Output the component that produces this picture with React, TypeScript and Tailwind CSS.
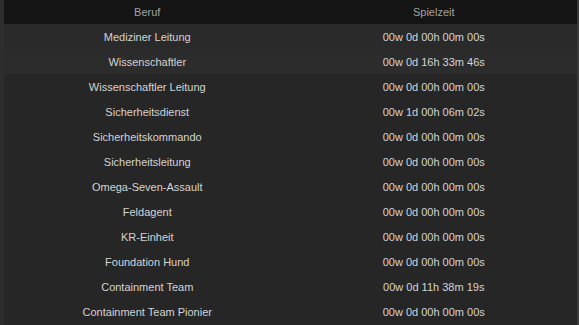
import React from "react";

type Row = { job: string; time: string };

const rows: Row[] = [
  { job: "Mediziner Leitung", time: "00w 0d 00h 00m 00s" },
  { job: "Wissenschaftler", time: "00w 0d 16h 33m 46s" },
  { job: "Wissenschaftler Leitung", time: "00w 0d 00h 00m 00s" },
  { job: "Sicherheitsdienst", time: "00w 1d 00h 06m 02s" },
  { job: "Sicherheitskommando", time: "00w 0d 00h 00m 00s" },
  { job: "Sicherheitsleitung", time: "00w 0d 00h 00m 00s" },
  { job: "Omega-Seven-Assault", time: "00w 0d 00h 00m 00s" },
  { job: "Feldagent", time: "00w 0d 00h 00m 00s" },
  { job: "KR-Einheit", time: "00w 0d 00h 00m 00s" },
  { job: "Foundation Hund", time: "00w 0d 00h 00m 00s" },
  { job: "Containment Team", time: "00w 0d 11h 38m 19s" },
  { job: "Containment Team Pionier", time: "00w 0d 00h 00m 00s" },
];

const rowBg = ["bg-[#2a2a2a]", "bg-[#2c2c2c]"];

export default function App() {
  return (
    <div
      className="w-[579px] h-[325px] overflow-hidden bg-[#262626] flex"
      style={{ fontFamily: '"Liberation Sans", Arial, sans-serif' }}
    >
      <div className="w-[4px] bg-[#2d2d2d] shrink-0" />
      <div className="flex-1 flex flex-col">
        <div className="h-[24px] bg-[#141414] grid grid-cols-2 items-center text-[11px] text-[#a3a3a3]">
          <div className="text-center">Beruf</div>
          <div className="text-center">Spielzeit</div>
        </div>
        {rows.map((r, i) => (
          <div
            key={r.job}
            className={`h-[25px] pt-[1px] grid grid-cols-2 items-center text-[11px] text-[#d4d4d4] ${rowBg[i] ?? "bg-[#262626]"}`}
          >
            <div className="text-center">{r.job}</div>
            <div className="text-center">{r.time}</div>
          </div>
        ))}
      </div>
      <div className="w-[2px] bg-[#3a3a3a] shrink-0" />
    </div>
  );
}
